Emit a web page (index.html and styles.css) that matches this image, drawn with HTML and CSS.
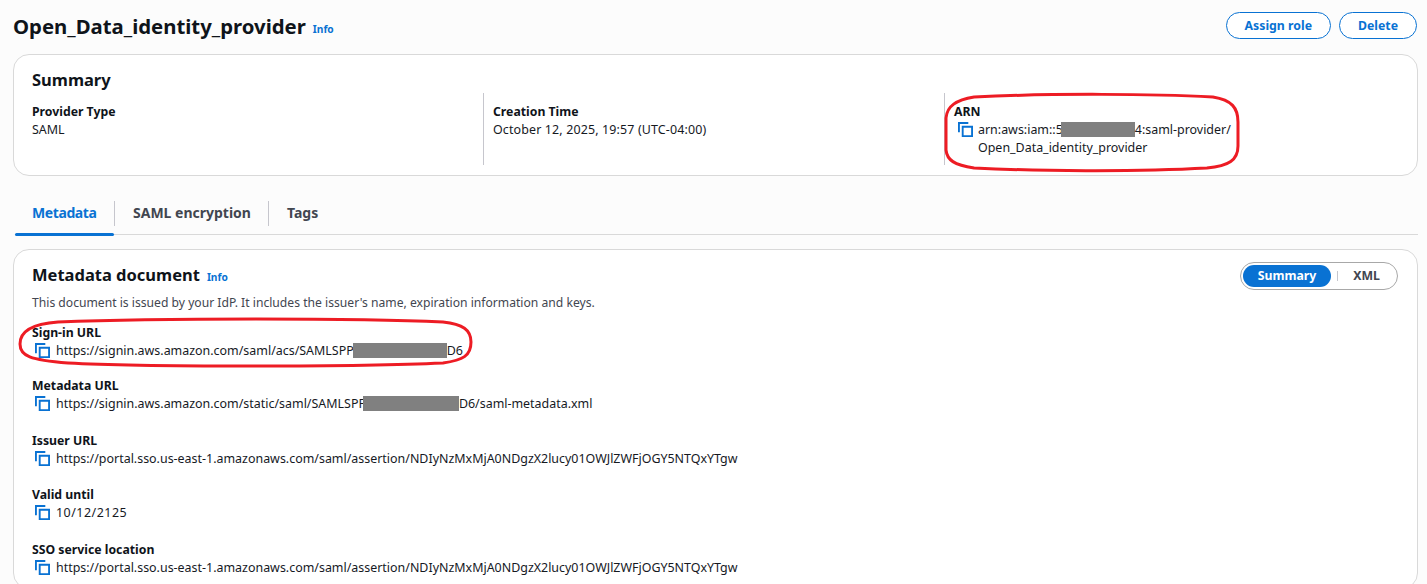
FILE: index.html
```html
<!DOCTYPE html>
<html lang="en">
<head>
<meta charset="utf-8">
<title>Open_Data_identity_provider</title>
<link rel="stylesheet" href="styles.css">
</head>
<body>
<svg width="0" height="0" class="defs"><symbol id="copy" viewBox="0 0 16 16"><path d="M1 11V1h10" fill="none" stroke="currentColor" stroke-width="2"/><path d="M5 5h10v10H5z" fill="none" stroke="currentColor" stroke-width="2"/></symbol></svg>
<main class="page">
  <header class="page-head">
    <h1 class="title">Open_Data_identity_provider</h1>
    <a class="info info-title">Info</a>
    <div class="actions">
      <button class="btn">Assign role</button>
      <button class="btn">Delete</button>
    </div>
  </header>

  <section class="card summary">
    <h2 class="h2">Summary</h2>
    <div class="cols">
      <div class="col col-1">
        <div class="label">Provider Type</div>
        <div class="value">SAML</div>
      </div>
      <div class="col col-2">
        <div class="label">Creation Time</div>
        <div class="value date-long">October 12, 2025, 19:57 (UTC-04:00)</div>
      </div>
      <div class="col col-3">
        <div class="label">ARN</div>
        <div class="copy-row arn">
          <svg class="icon"><use href="#copy"/></svg>
          <div class="value">arn:aws:iam::5<span class="redact r-arn"></span>4:saml-provider/<br>Open_Data_identity_provider</div>
        </div>
      </div>
    </div>
    <svg class="ring ring-arn" viewBox="0 0 296 78" preserveAspectRatio="none"><path d="M30 3C110 -1 210 0 268 3C287 6 293 14 293 28V52C293 66 284 72 262 74C190 78 90 77 30 74C10 71 3 66 2 56L2 24C3 12 12 6 30 3Z"/></svg>
  </section>

  <nav class="tabs">
    <a class="tab active">Metadata</a>
    <a class="tab">SAML encryption</a>
    <a class="tab">Tags</a>
  </nav>

  <section class="card meta">
    <div class="meta-head">
      <h2 class="h2">Metadata document</h2>
      <a class="info info-h2">Info</a>
      <div class="segment">
        <span class="seg seg-on">Summary</span>
        <span class="seg-sep"></span>
        <span class="seg">XML</span>
      </div>
    </div>
    <p class="desc">This document is issued by your IdP. It includes the issuer's name, expiration information and keys.</p>
    <div class="field">
      <div class="label">Sign-in URL</div>
      <div class="copy-row"><svg class="icon"><use href="#copy"/></svg><div class="value">https://signin.aws.amazon.com/saml/acs/SAMLSPP<span class="redact r-sign"></span>D6</div></div>
    </div>
    <div class="field">
      <div class="label">Metadata URL</div>
      <div class="copy-row"><svg class="icon"><use href="#copy"/></svg><div class="value">https://signin.aws.amazon.com/static/saml/SAMLSPF<span class="redact r-meta"></span>D6/saml-metadata.xml</div></div>
    </div>
    <div class="field">
      <div class="label">Issuer URL</div>
      <div class="copy-row"><svg class="icon"><use href="#copy"/></svg><div class="value">https://portal.sso.us-east-1.amazonaws.com/saml/assertion/NDIyNzMxMjA0NDgzX2lucy01OWJlZWFjOGY5NTQxYTgw</div></div>
    </div>
    <div class="field">
      <div class="label">Valid until</div>
      <div class="copy-row"><svg class="icon"><use href="#copy"/></svg><div class="value date-short">10/12/2125</div></div>
    </div>
    <div class="field">
      <div class="label">SSO service location</div>
      <div class="copy-row"><svg class="icon"><use href="#copy"/></svg><div class="value">https://portal.sso.us-east-1.amazonaws.com/saml/assertion/NDIyNzMxMjA0NDgzX2lucy01OWJlZWFjOGY5NTQxYTgw</div></div>
    </div>
    <svg class="ring ring-sign" viewBox="0 0 456 50" preserveAspectRatio="none"><path d="M40 4C140 0 340 0 425 4C445 6 453 12 453 24C453 38 445 42 425 45C340 49 120 49 50 45C12 42 2 38 2 26C2 14 12 6 40 4Z"/></svg>
  </section>
</main>
</body>
</html>
```
FILE: styles.css
```css
* { box-sizing: border-box; }
html, body { margin: 0; height: 584px; overflow: hidden; }
body { background: #fcfcfc; color: #16191f; font-family: "Noto Sans", "Open Sans", sans-serif; font-size: 12.45px; line-height: 18px; }
.defs { position: absolute; }
.page { padding: 0 9px 0 13px; }
.page-head { display: flex; align-items: center; height: 54px; padding-bottom: 2px; }
.title { margin: 0; font-size: 20.35px; line-height: 28px; font-weight: 700; color: #0f141a; }
.info { color: #0972d3; font-size: 10.2px; font-weight: 700; }
.info-title { margin: 5px 0 0 7px; }
.actions { margin: 0 1px 0 auto; display: flex; gap: 8px; padding-bottom: 1px; }
.btn { height: 27px; padding: 0 18px; border: 1.5px solid #0972d3; border-radius: 14px; background: #fff; color: #0972d3; font: 700 12.3px "Noto Sans", sans-serif; }
.card { position: relative; background: #fff; border: 1px solid #d9d9d9; border-radius: 16px; padding: 0 18px; }
.summary { height: 122px; padding-top: 13px; }
.h2 { margin: 0; font-size: 16.5px; line-height: 24px; font-weight: 700; color: #0f141a; }
.cols { display: flex; margin-top: 1px; height: 72px; }
.col { padding-top: 10px; }
.col-1 { width: 451px; }
.col-2 { width: 461px; border-left: 1px solid #c6c6cd; padding-left: 9px; }
.col-3 { border-left: 1px solid #c6c6cd; padding-left: 9px; }
.label { font-weight: 700; font-size: 12.25px; color: #0f141a; }
.value { color: #16191f; }
.date-long { letter-spacing: 0.14px; }
.date-short { letter-spacing: 0.5px; }
.copy-row { display: flex; align-items: flex-start; gap: 6px; padding-left: 3px; }
.arn { gap: 5px; padding-left: 4px; }
.icon { width: 15px; height: 15px; margin-top: 1px; flex: none; color: #0972d3; }
.redact { display: inline-block; height: 15px; vertical-align: -3px; background: #808080; }
.r-arn { width: 74px; margin-left: -2px; }
.r-sign { width: 94px; margin-left: -1px; }
.r-meta { width: 96px; margin-left: -2px; }
.ring { position: absolute; overflow: visible; pointer-events: none; }
.ring path { fill: none; stroke: #ed1c24; stroke-width: 3; vector-effect: non-scaling-stroke; }
.ring-arn { left: 930px; top: 39px; width: 297px; height: 78px; }
.ring-sign { left: 4px; top: 68px; width: 456px; height: 50px; }
.tabs { display: flex; height: 37px; margin: 22px 0 14px 2px; border-bottom: 1px solid #d9d9d9; align-items: flex-start; }
.tab { position: relative; height: 37px; padding: 5px 17px 0 19px; font-size: 14px; line-height: 20px; font-weight: 700; color: #424650; }
.tab + .tab::before { content: ""; position: absolute; left: 0; top: 3px; height: 25px; width: 1px; background: #c6c6cd; }
.tab.active { color: #0972d3; width: 99px; padding-left: 17px; letter-spacing: -0.4px; }
.tab.active::after { content: ""; position: absolute; left: 0; right: 0; bottom: -1px; height: 3px; border-radius: 2px; background: #0972d3; }
.meta { height: 340px; padding-top: 12px; }
.meta-head { display: flex; align-items: center; height: 26px; }
.info-h2 { margin: 3px 0 0 7px; }
.segment { margin: 2px 1px 0 auto; display: flex; align-items: center; height: 28px; border: 1px solid #a8a8a8; border-radius: 14px; padding: 0 2px; }
.seg { height: 22px; padding: 0 15px; font-size: 12.3px; line-height: 21px; font-weight: 700; color: #424650; }
.seg-on { background: #0972d3; color: #fff; border-radius: 11px; }
.seg-sep { width: 1px; height: 10px; background: #c6c6cd; margin-left: 6px; }
.desc { margin: 6px 0 0; color: #424650; font-size: 12.15px; line-height: 18px; }
.field { margin-top: 12px; height: 36px; }
.field + .field { margin-top: 17px; }
.field + .field + .field { margin-top: 18.5px; }
```
